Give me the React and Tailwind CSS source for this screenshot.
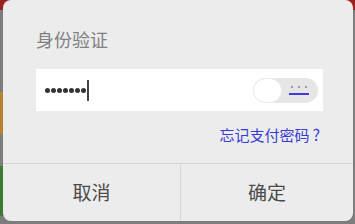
export default function App() {
  return (
    <div className="relative w-[355px] h-[224px] overflow-hidden bg-[#7d7d7d]" style={{ fontFamily: '"Noto Sans CJK SC", "Noto Sans", sans-serif' }}>
      {/* page behind the dialog */}
      <div className="absolute left-0 top-0 w-full h-[10px] bg-[#9a2222]" />
      <div className="absolute left-0 top-[92px] w-[6px] h-[42px] bg-[#b5832f]" />
      <div className="absolute left-0 top-[166px] w-[6px] h-[50px] bg-[#3b7a35]" />

      <div className="relative ml-[3px] w-[350px] h-[221px] rounded-[8px] bg-[#ececec] flex flex-col">
        <div className="flex-1 pl-[33px] pr-[30px]">
          <h3 className="pt-[28px] text-[18px] leading-[22px] text-[#808080]">身份验证</h3>
          <div className="mt-[19px] h-[42px] bg-white flex items-center pl-[9px] pr-[5px]">
            <div className="flex items-center gap-[1px]">
              {[0, 1, 2, 3, 4, 5, 6].map((i) => (
                <span key={i} className="w-[5px] h-[5px] rounded-full bg-[#333]" />
              ))}
            </div>
            <span className="ml-[1px] w-[2px] h-[21px] bg-[#444]" />
            <div className="ml-auto w-[65px] h-[25px] rounded-full bg-[#e6e6e6] flex items-center">
              <span className="w-[29px] h-[25px] rounded-full bg-white border border-[#ececec]" />
              <div className="ml-[7px] flex flex-col items-center">
                <div className="flex gap-[5px]">
                  <span className="w-[2px] h-[2px] rounded-full bg-[#888]" />
                  <span className="w-[2px] h-[2px] rounded-full bg-[#888]" />
                  <span className="w-[2px] h-[2px] rounded-full bg-[#888]" />
                </div>
                <span className="mt-[5px] w-[20px] h-[2px] bg-[#3d3ddc]" />
              </div>
            </div>
          </div>
          <div className="mt-[13px] flex justify-end pr-[3px]">
            <span className="text-[15px] leading-[20px] text-[#3a3ad6]">忘记支付密码<span className="ml-[3px] text-[16px]">?</span></span>
          </div>
        </div>
        <div className="h-[58px] border-t border-[#d6d6d6] flex">
          <button className="w-[178px] border-r border-[#d6d6d6] text-[19px] text-[#4a4a4a]">取消</button>
          <button className="flex-1 text-[19px] text-[#4a4a4a]">确定</button>
        </div>
      </div>
    </div>
  )
}
